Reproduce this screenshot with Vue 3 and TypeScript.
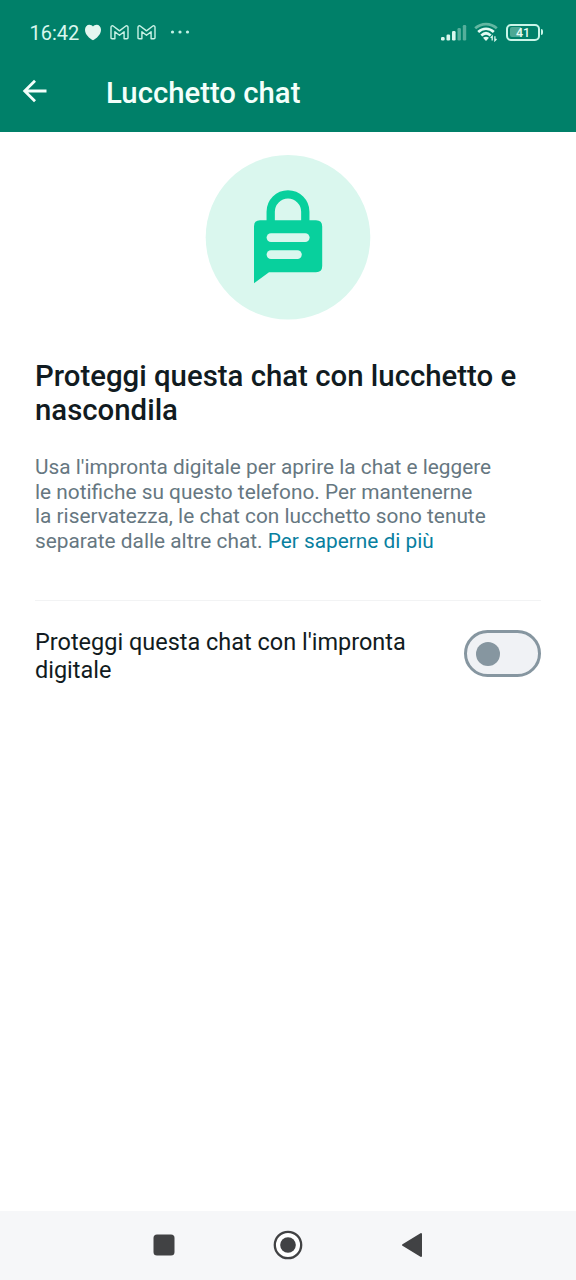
<script setup lang="ts">
import { ref } from 'vue'

const time = '16:42'
const batteryLevel = 41
const locked = ref(false)
const headingLines = ['Proteggi questa chat con lucchetto e', 'nascondila']
const bodyLines = [
  "Usa l'impronta digitale per aprire la chat e leggere",
  'le notifiche su questo telefono. Per mantenerne',
  'la riservatezza, le chat con lucchetto sono tenute',
]
const toggleLines = ["Proteggi questa chat con l'impronta", 'digitale']
</script>

<template>
  <div class="screen">
    <header class="top">
      <div class="status">
        <span class="time">{{ time }}</span>
        <svg class="heart" width="18" height="17" viewBox="0 0 18 17">
          <path d="M9 16.200C5.500 14.500 1 10.600 1 5.800C1 2.700 3 .7 5.300 .7C7 .7 8.200 1.400 9 2.500C9.800 1.400 11 .7 12.700 .7C15 .7 17 2.700 17 5.800C17 10.600 12.500 14.500 9 16.200Z" fill="#e4f6f0" />
        </svg>
        <svg v-for="n in 2" :key="n" class="mail" width="19" height="15" viewBox="0 0 19 15">
          <path d="M1 2.200C1 .8 2.500 .4 3.500 1.200L9.500 5.900L15.500 1.200C16.500 .4 18 .8 18 2.200V12.700Q18 13.800 16.900 13.800H14.100V6.700L9.500 10.300L4.900 6.700V13.800H2.100Q1 13.800 1 12.700Z" fill="none" stroke="#c9f2e6" stroke-width="1.400" stroke-linejoin="round" />
        </svg>
        <svg class="dots" width="20" height="4" viewBox="0 0 20 4" fill="#c3f1e5">
          <circle cx="2.500" cy="2" r="1.600" /><circle cx="10" cy="2" r="1.600" /><circle cx="17.500" cy="2" r="1.600" />
        </svg>
        <span class="spacer"></span>
        <svg class="signal" width="26" height="17" viewBox="0 0 26 17">
          <g fill="#d8f7ee">
            <rect x="0" y="13" width="3.600" height="3.500" rx="1.200" />
            <rect x="5.500" y="10.500" width="3.600" height="6" rx="1.200" />
            <rect x="11" y="7" width="3.600" height="9.500" rx="1.200" />
          </g>
          <g fill="#55af9b">
            <rect x="16.500" y="4" width="3.400" height="12.500" rx="1.200" />
            <rect x="21.800" y="1" width="3.400" height="15.500" rx="1.200" />
          </g>
        </svg>
        <svg class="wifi" width="26" height="20" viewBox="0 0 26 20" fill="none" stroke-width="2.700">
          <path d="M1.200 6.300C7.500 .6 16.500 .6 22.800 6.300" stroke="#62b7a2" />
          <path d="M4.200 9.900C8.700 5.700 15.300 5.700 19.800 9.900" stroke="#e4fbf4" />
          <path d="M7.300 13.400C10.200 10.700 13.800 10.700 16.700 13.400" stroke="#e4fbf4" />
          <path d="M12 19L9 15.800Q12 13.500 15 15.800Z" fill="#e4fbf4" />
          <path d="M18.200 18.600V14.300L16.600 15.900M20.900 14.300V18.600L22.500 17" stroke="#d8f7ee" stroke-width="1.300" />
        </svg>
        <span class="battery">
          <span class="charge" :style="{ width: batteryLevel + '%' }"></span>
          <span class="level">{{ batteryLevel }}</span>
        </span>
        <span class="battery-tip"></span>
      </div>
      <div class="bar">
        <svg class="back" width="25" height="24" viewBox="0 0 25 24" fill="none" stroke="#f3fffb" stroke-width="2.800">
          <path d="M24.500 12H3.300M13 1.700L2.700 12L13 22.300" />
        </svg>
        <h1>Lucchetto chat</h1>
      </div>
    </header>

    <main>
      <svg class="hero" width="166" height="166" viewBox="0 0 166 166">
        <circle cx="83" cy="83.300" r="82.300" fill="#daf7ee" />
        <path d="M65.700 68V58A17.300 17.300 0 0 1 100.300 58V68" transform="translate(0 -.3)" fill="none" stroke="#08d09d" stroke-width="8.300" />
        <path d="M55 66.300H111Q117.200 66.300 117.200 72.500V112Q117.200 118.200 111 118.200H64L49 129.200V72.300Q49 66.300 55 66.300Z" fill="#08d09d" />
        <rect x="61.600" y="79.200" width="43" height="8.800" rx="4.400" fill="#daf7ee" />
        <rect x="61.600" y="96.200" width="35.200" height="8.800" rx="4.400" fill="#daf7ee" />
      </svg>
      <h2><span v-for="line in headingLines" :key="line" class="line">{{ line }}</span></h2>
      <p class="body">
        <span v-for="line in bodyLines" :key="line" class="line">{{ line }}</span>
        <span class="line">separate dalle altre chat. <a>Per saperne di più</a></span>
      </p>
      <div class="setting">
        <span class="label"><span v-for="line in toggleLines" :key="line" class="line">{{ line }}</span></span>
        <button class="switch" :class="{ on: locked }" role="switch" :aria-checked="locked" @click="locked = !locked">
          <span class="thumb"></span>
        </button>
      </div>
    </main>

    <nav>
      <svg width="22" height="22" viewBox="0 0 22 22"><rect x=".5" y=".5" width="21" height="21" rx="3.500" fill="#414244" /></svg>
      <svg width="30" height="30" viewBox="0 0 30 30">
        <circle cx="15" cy="15" r="13.200" fill="#fff" stroke="#414244" stroke-width="2.300" />
        <circle cx="15" cy="15" r="7.800" fill="#414244" />
      </svg>
      <svg width="22" height="26" viewBox="0 0 22 26"><path d="M20 2V24L2 13Z" fill="#414244" stroke="#414244" stroke-width="2" stroke-linejoin="round" /></svg>
    </nav>
  </div>
</template>

<style scoped>
.screen {
  width: 576px;
  height: 1280px;
  display: flex;
  flex-direction: column;
  background: #fff;
  font-family: Roboto, "Liberation Sans", sans-serif;
  overflow: hidden;
}
.top {
  height: 132px;
  flex: none;
  background: #008069;
}
.status {
  height: 64px;
  display: flex;
  align-items: center;
  padding: 0 33px 0 29.500px;
  box-sizing: border-box;
}
.time {
  width: 54.500px;
  font-size: 20px;
  line-height: 24px;
  color: #d8f7ee;
  padding-top: 2px;
}
.heart { margin-right: 8px; }
.mail { margin-right: 8px; }
.dots { margin-left: 6px; }
.spacer { flex: 1; }
.signal { margin-right: 7px; }
.wifi { margin-right: 6px; }
.battery {
  position: relative;
  width: 34px;
  height: 17px;
  box-sizing: border-box;
  border: 2px solid #c9f5e8;
  border-radius: 5px;
  padding: 1.500px;
  display: flex;
}
.charge {
  background: #4ca894;
  border-radius: 2px 0 0 2px;
}
.level {
  position: absolute;
  inset: 0;
  text-align: center;
  font-size: 12.500px;
  line-height: 14px;
  font-weight: 500;
  color: #e4fbf4;
}
.battery-tip {
  width: 2px;
  height: 6px;
  margin-left: 1px;
  border-radius: 0 2px 2px 0;
  background: #c9f5e8;
}
.bar {
  height: 56px;
  display: flex;
  align-items: center;
  padding-left: 22px;
}
.back { margin-top: -2px; }
h1 {
  margin: 1px 0 0 59px;
  font-size: 29.300px;
  line-height: 36px;
  font-weight: 500;
  color: #f3fffb;
  white-space: nowrap;
}
main {
  flex: 1;
  display: flex;
  flex-direction: column;
  padding: 22px 35px 0;
}
.hero { align-self: center; }
h2 {
  margin: 39px 0 0;
  font-size: 29.370px;
  line-height: 34px;
  font-weight: 500;
  color: #111b21;
}
.line {
  display: block;
  white-space: nowrap;
}
.body {
  margin: 28px 0 0;
  font-size: 20.830px;
  line-height: 24.500px;
  color: #667781;
}
.body a { color: #087f9f; }
.setting {
  margin-top: 47px;
  padding-top: 26px;
  border-top: 1px solid #f2f3f4;
  display: flex;
  justify-content: space-between;
  align-items: flex-start;
}
.label {
  font-size: 23.470px;
  line-height: 28px;
  padding-top: 1px;
  color: #111b21;
}
.switch {
  width: 77px;
  height: 47px;
  margin-top: 3px;
  padding: 0 9px;
  border: 3px solid #8696a0;
  border-radius: 24px;
  background: #f0f2f5;
  display: flex;
  align-items: center;
}
.switch.on { justify-content: flex-end; }
.thumb {
  width: 24px;
  height: 24px;
  border-radius: 50%;
  background: #8696a0;
}
nav {
  height: 69px;
  flex: none;
  background: #f6f7f9;
  display: flex;
  align-items: center;
  justify-content: space-between;
  padding: 0 153.500px 1px 152.500px;
  box-sizing: border-box;
}
</style>

<style>
body { margin: 0; }
</style>
